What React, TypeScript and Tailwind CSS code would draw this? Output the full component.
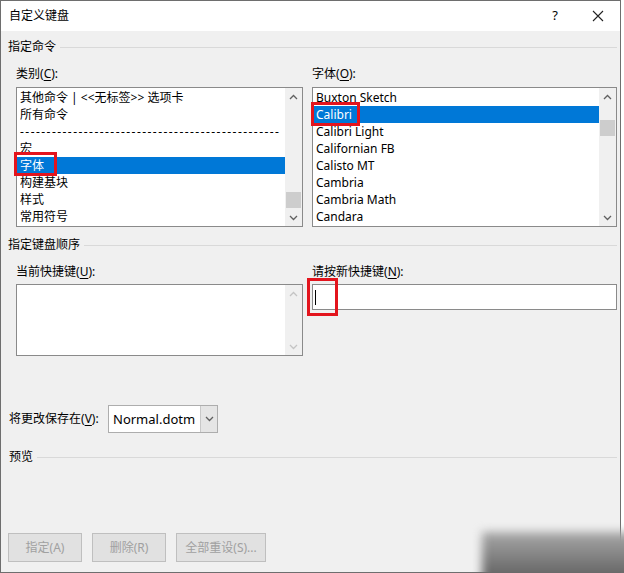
import React from "react";

const font = { fontFamily: '"Noto Sans", "Noto Sans CJK SC", sans-serif' };

const Chevron = ({ up, light }: { up?: boolean; light?: boolean }) => (
  <svg width="9" height="6" viewBox="0 0 9 6">
    <polyline
      points={up ? "1,5 4.5,1.5 8,5" : "1,1 4.5,4.5 8,1"}
      fill="none"
      stroke={light ? "#c4c4c4" : "#606060"}
      strokeWidth="1.3"
    />
  </svg>
);

const Key = ({ text, k }: { text: string; k: string }) => (
  <span>
    {text}(<span className="underline underline-offset-2">{k}</span>):
  </span>
);

const GroupHeader = ({ title, className }: { title: string; className?: string }) => (
  <div className={"flex items-center h-4 " + (className ?? "")}>
    <span className="leading-4">{title}</span>
    <div className="flex-1 ml-1 border-t border-[#d9d9d9]" />
  </div>
);

const ScrollBar = ({ thumbTop, light }: { thumbTop?: number; light?: boolean }) => (
  <div className="w-[17px] bg-[#f0f0f0] flex flex-col shrink-0">
    <div className="h-[17px] flex items-center justify-center">
      <Chevron up light={light} />
    </div>
    <div className="flex-1 flex flex-col px-[1px]">
      {thumbTop !== undefined && (
        <div className="h-[16px] bg-[#cdcdcd]" style={{ marginTop: thumbTop }} />
      )}
    </div>
    <div className="h-[17px] flex items-center justify-center">
      <Chevron light={light} />
    </div>
  </div>
);

const ListBox = ({
  items,
  selected,
  thumbTop,
}: {
  items: string[];
  selected: number;
  thumbTop: number;
}) => (
  <div className="h-[140px] border border-[#8a8a8a] bg-white flex">
    <div className="flex-1 pt-[1px] overflow-hidden">
      {items.map((it, i) => (
        <div
          key={i}
          className={
            "h-[17px] leading-[17px] pl-[3px] whitespace-nowrap overflow-hidden " +
            (i === selected ? "bg-[#0078d7] text-white " : "") +
            (it.startsWith("---") ? "tracking-[1.45px]" : "")
          }
        >
          {it}
        </div>
      ))}
    </div>
    <ScrollBar thumbTop={thumbTop} />
  </div>
);

const Button = ({ label, w }: { label: string; w: string }) => (
  <div
    className={
      "h-[29px] border border-[#bfbfbf] bg-[#e1e1e1] text-[#a0a0a0] flex items-center justify-center " + w
    }
  >
    {label}
  </div>
);

export default function App() {
  const categories = [
    "其他命令 | <<无标签>> 选项卡",
    "所有命令",
    "-".repeat(49),
    "宏",
    "字体",
    "构建基块",
    "样式",
    "常用符号",
  ];
  const fonts = [
    "Buxton Sketch",
    "Calibri",
    "Calibri Light",
    "Californian FB",
    "Calisto MT",
    "Cambria",
    "Cambria Math",
    "Candara",
  ];

  return (
    <div className="w-[624px] h-[573px] bg-white relative overflow-hidden text-[12px] text-black" style={font}>
      <div className="w-[621px] h-[573px] border border-[#6e6e6e] flex flex-col">
        {/* title bar */}
        <div className="h-[30px] bg-white flex items-center pl-2 shrink-0">
          <span className="flex-1">自定义键盘</span>
          <span className="w-[20px] text-center text-[13px] mr-[27px]">?</span>
          <svg width="12" height="12" viewBox="0 0 12 12" className="mr-[16px]">
            <path d="M1 1 L11 11 M11 1 L1 11" stroke="#222" strokeWidth="1.1" />
          </svg>
        </div>

        {/* body */}
        <div className="flex-1 bg-[#f0f0f0] pl-[7px] pr-[3px] flex flex-col relative">
          <GroupHeader title="指定命令" className="mt-[8px]" />

          <div className="grid grid-cols-[287px_305px] gap-x-[9px] pl-[8px] mt-[11px]">
            <div className="leading-4 mb-[5px]">
              <Key text="类别" k="C" />
            </div>
            <div className="leading-4 mb-[5px]">
              <Key text="字体" k="O" />
            </div>
            <div className="relative">
              <ListBox items={categories} selected={4} thumbTop={87} />
              <div className="absolute left-[-2px] top-[65px] w-[43px] h-[24px] border-[3px] border-[#e3141d]" />
            </div>
            <div className="relative">
              <ListBox items={fonts} selected={1} thumbTop={15} />
              <div className="absolute left-[-1px] top-[15px] w-[49px] h-[24px] border-[3px] border-[#e3141d]" />
            </div>
          </div>

          <GroupHeader title="指定键盘顺序" className="mt-[10px]" />

          <div className="grid grid-cols-[287px_305px] gap-x-[9px] pl-[8px] mt-[11px]">
            <div className="leading-4 mb-[4px]">
              <Key text="当前快捷键" k="U" />
            </div>
            <div className="leading-4 mb-[4px]">
              <Key text="请按新快捷键" k="N" />
            </div>
            <div className="h-[72px] border border-[#8a8a8a] bg-white flex">
              <div className="flex-1" />
              <ScrollBar light />
            </div>
            <div className="relative self-start">
              <div className="h-[26px] border border-[#8a8a8a] bg-white flex items-center pl-[2px]">
                <div className="w-px h-[15px] bg-black" />
              </div>
              <div className="absolute left-[-5px] top-[-6px] w-[31px] h-[38px] border-[3px] border-[#e3141d]" />
            </div>
          </div>

          <div className="flex items-center mt-[49px] pl-[1px]">
            <span className="w-[99px] leading-4">
              <Key text="将更改保存在" k="V" />
            </span>
            <div className="w-[110px] h-[28px] border border-[#adadad] bg-white flex">
              <span className="flex-1 pl-[4px] text-[13px] leading-[26px]">Normal.dotm</span>
              <div className="w-[17px] bg-[#e5e5e5] border-l border-[#c8c8c8] flex items-center justify-center">
                <Chevron />
              </div>
            </div>
          </div>

          <GroupHeader title="预览" className="mt-[16px] pl-[1px]" />

          <div className="flex gap-[10px] mt-[68px]">
            <Button label="指定(A)" w="w-[74px]" />
            <Button label="删除(R)" w="w-[74px]" />
            <Button label="全部重设(S)..." w="w-[90px]" />
          </div>
        </div>
      </div>

      {/* blurred watermark in the corner */}
      <div className="absolute left-[482px] top-[532px] w-[160px] h-[50px] bg-linear-to-b from-[#a8a8a8] to-[#5c5c5c] blur-[5px]" />
    </div>
  );
}
